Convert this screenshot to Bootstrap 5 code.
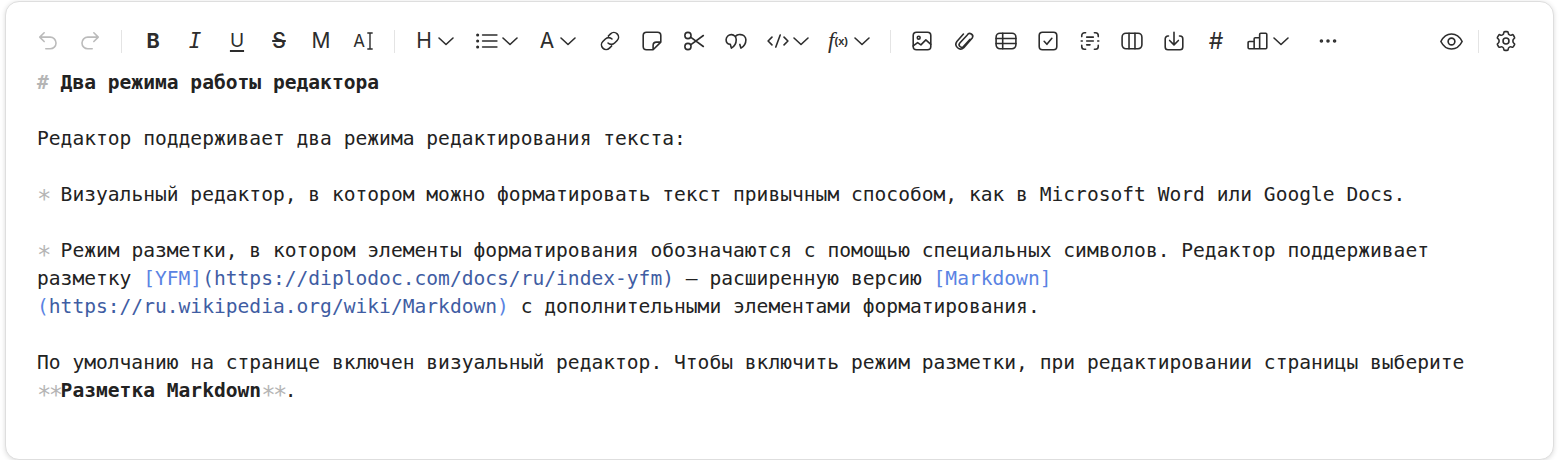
<!doctype html>
<html lang="ru"><head><meta charset="utf-8">
<link href="https://cdn.jsdelivr.net/npm/bootstrap@5.3.0/dist/css/bootstrap.min.css" rel="stylesheet">
<style>
body{background:#fff;overflow:hidden}
.ed-shell{width:1549px;height:459px;margin:1px 0 0 5px;background:#fff;border:1px solid #dedede;border-radius:14px;box-shadow:0 1px 5px rgba(0,0,0,.14)}
.ed-bar{height:36px;margin:21px 26px 10px 21px;color:#2d2d2d}
.ed-btn{height:28px;width:42px;padding:0;border:0;background:none;color:#2d2d2d;font:400 21px/28px Inter,sans-serif;display:flex;align-items:center;justify-content:center;flex:none}
.ed-btn.ed-drop{width:62px;gap:3px}
.ed-btn.ed-drop.ed-w61{width:61px;gap:5px}
.ed-btn.ed-off{color:#bbb}
.ed-btn svg{width:22px;height:22px;flex:none;fill:none;stroke:currentColor;stroke-width:1.45;stroke-linecap:round;stroke-linejoin:round}
.ed-btn svg.ed-chev{width:18px;height:18px;stroke-width:1.6}
.ed-btn svg.ed-eye{width:25px;height:25px;stroke-width:1.3}
.ed-btn svg.ed-cursor{width:6px;height:18px;stroke-width:1.4;margin-left:2px}
.ed-sep{width:1px;height:23px;background:#e4e4e4;margin:0 10px;flex:none}
.ed-sep.ed-sep2{margin:0 6px}
.ed-btn.ed-b{font-weight:700;font-size:20px}
.ed-btn.ed-i{font:italic 400 21px "DejaVu Sans Mono",monospace}
.ed-btn.ed-u{text-decoration:underline;text-underline-offset:3px;text-decoration-thickness:1.5px;font-size:19px}
.ed-btn.ed-s{text-decoration:line-through;text-decoration-thickness:1.5px;font-size:21px;font-weight:500}
.ed-btn.ed-hash{font-size:23px}
.ed-a{font-size:17px}
.ed-fx{display:inline-flex;align-items:center}
.ed-f{font:italic 400 23px/28px "Liberation Serif",serif}
.ed-x{font:700 11px/28px "Liberation Sans",sans-serif}
.ed-text{margin:0 40px 0 31px;font:19.6px/28px "DejaVu Sans Mono","Liberation Mono",monospace;color:#222;white-space:pre-wrap}
.ed-mk{color:#b5b5b5}
.ed-ast{vertical-align:-6px;line-height:0;font-size:24px;letter-spacing:-2.65px;font-weight:400}
.ed-strong{font-weight:700}
.ed-ln{color:#5a83e3}
.ed-url{color:#3f5da3;white-space:nowrap}
</style></head>
<body>
<svg width="0" height="0" class="position-absolute"><symbol id="chev" viewBox="0 0 18 18"><path d="M2 6l7 6.500L16 6"/></symbol></svg>
<div class="ed-shell">
<div class="ed-bar d-flex align-items-center">
<button class="ed-btn ed-off" aria-label="undo"><svg viewBox="0 0 20 20"><path d="M6.500 2.500 2.500 6.500l4 4M2.500 6.500H12a5.300 5.300 0 0 1 0 10.600H8"/></svg></button>
<button class="ed-btn ed-off" aria-label="redo"><svg viewBox="0 0 20 20"><path d="M13.500 2.500l4 4-4 4M17.500 6.500H8a5.300 5.300 0 0 0 0 10.600h4"/></svg></button>
<span class="ed-sep"></span>
<button class="ed-btn ed-b">B</button>
<button class="ed-btn ed-i">I</button>
<button class="ed-btn ed-u">U</button>
<button class="ed-btn ed-s">S</button>
<button class="ed-btn">M</button>
<button class="ed-btn" aria-label="typograf"><span class="ed-a">A</span><svg class="ed-cursor" viewBox="0 0 6 18"><path d="M.8 1h4.400M.8 17h4.400M3 1v16"/></svg></button>
<span class="ed-sep"></span>
<button class="ed-btn ed-drop ed-w61">H<svg class="ed-chev"><use href="#chev"/></svg></button>
<button class="ed-btn ed-drop" aria-label="list"><svg viewBox="0 0 20 20"><path d="M6 4.500h13M6 10h13M6 15.500h13"/><circle cx="1.500" cy="4.500" r=".7"/><circle cx="1.500" cy="10" r=".7"/><circle cx="1.500" cy="15.500" r=".7"/></svg><svg class="ed-chev"><use href="#chev"/></svg></button>
<button class="ed-btn ed-drop ed-w61">A<svg class="ed-chev"><use href="#chev"/></svg></button>
<button class="ed-btn" aria-label="link"><svg viewBox="0 0 20 20"><path d="M8.500 5.500 10.500 3.500a4.200 4.200 0 0 1 6 6l-2.300 2.300a4.200 4.200 0 0 1-6 0M11.500 14.500l-2 2a4.200 4.200 0 0 1-6-6l2.300-2.300a4.200 4.200 0 0 1 6 0"/></svg></button>
<button class="ed-btn" aria-label="note"><svg viewBox="0 0 20 20"><path d="M18 11V5a3 3 0 0 0-3-3H5a3 3 0 0 0-3 3v10a3 3 0 0 0 3 3h6zM18 11h-4a3 3 0 0 0-3 3v4"/></svg></button>
<button class="ed-btn" aria-label="cut"><svg viewBox="0 0 20 20"><circle cx="4.500" cy="5" r="2.800"/><circle cx="4.500" cy="15" r="2.800"/><path d="M6.900 6.500 18.500 15M6.900 13.500 18.500 5"/></svg></button>
<button class="ed-btn" aria-label="quote"><svg viewBox="0 0 20 20"><path d="M6 4.200a4.700 4.700 0 0 0-5 4.600c0 2.500 1.700 4 3.800 4.200l1 3.500c2.500-1.500 4.400-4.500 4.400-7.700a4.700 4.700 0 0 0-4.200-4.600zM9.500 5.800a4.700 4.700 0 0 1 4.500-1.600 4.700 4.700 0 0 1 5 4.600c0 3.200-2 6.200-4.500 7.700l-1-3.400"/></svg></button>
<button class="ed-btn ed-drop" aria-label="code"><svg viewBox="0 0 20 20"><path d="M4.500 6.500 1 10l3.500 3.500M15.500 6.500 19 10l-3.500 3.500M12 4.500l-4 11"/></svg><svg class="ed-chev"><use href="#chev"/></svg></button>
<button class="ed-btn ed-drop ed-w61" aria-label="formula"><span class="ed-fx"><i class="ed-f">f</i><span class="ed-x">(x)</span></span><svg class="ed-chev"><use href="#chev"/></svg></button>
<span class="ed-sep"></span>
<button class="ed-btn" aria-label="image"><svg viewBox="0 0 20 20"><rect x="2" y="2" width="16" height="16" rx="3"/><circle cx="7" cy="7" r="1.300"/><path d="M2 14.500l4-3 3 2 4.500-4.500 4.500 4"/></svg></button>
<button class="ed-btn" aria-label="file"><svg viewBox="0 0 20 20"><path d="M15.500 8.500 9.500 15a2.300 2.300 0 0 1-3.300-3.200l6.800-7.300a2.200 2.200 0 0 1 4.500 2.800l-7.700 8.700a4.200 4.200 0 0 1-6.300-5.500l6-6.800"/></svg></button>
<button class="ed-btn" aria-label="table"><svg viewBox="0 0 20 20"><rect x="1" y="3" width="18" height="14" rx="3.500"/><path d="M1 7.700h18M1 12.300h18M7 3v14"/></svg></button>
<button class="ed-btn" aria-label="check"><svg viewBox="0 0 20 20"><rect x="2" y="2" width="16" height="16" rx="3"/><path d="M6.500 10.300 9 13l4.500-5.500"/></svg></button>
<button class="ed-btn" aria-label="scan"><svg viewBox="0 0 20 20"><path d="M6 2.500H5A2.500 2.500 0 0 0 2.500 5v1M14 2.500h1A2.500 2.500 0 0 1 17.500 5v1M6 17.500H5A2.500 2.500 0 0 1 2.500 15v-1M14 17.500h1a2.500 2.500 0 0 0 2.500-2.500v-1M2 10h1M17 10h1M7 6.500h6M7 10h6M7 13.500h3"/></svg></button>
<button class="ed-btn" aria-label="columns"><svg viewBox="0 0 20 20"><rect x="1" y="3" width="18" height="14" rx="3.500"/><path d="M7.300 3v14M12.700 3v14"/></svg></button>
<button class="ed-btn" aria-label="download"><svg viewBox="0 0 20 20"><path d="M10 2v11M6 9.500l4 4 4-4M5 5.500H4.500a2.500 2.500 0 0 0-2.500 2.500v7.500a2.500 2.500 0 0 0 2.500 2.500h11a2.500 2.500 0 0 0 2.500-2.500V8a2.500 2.500 0 0 0-2.500-2.500H15"/></svg></button>
<button class="ed-btn ed-hash">#</button>
<button class="ed-btn ed-drop" aria-label="chart"><svg viewBox="0 0 20 20"><path d="M1 11.500a1 1 0 0 1 1-1h4.500V17H2a1 1 0 0 1-1-1zM6.500 8a1 1 0 0 1 1-1h4v10h-5zM11.500 4a1 1 0 0 1 1-1h4.500a1 1 0 0 1 1 1v12a1 1 0 0 1-1 1h-5.500z"/></svg><svg class="ed-chev"><use href="#chev"/></svg></button>
<button class="ed-btn ms-2" aria-label="more"><svg viewBox="0 0 20 20"><circle cx="4" cy="10" r=".9"/><circle cx="10" cy="10" r=".9"/><circle cx="16" cy="10" r=".9"/></svg></button>
<div class="ms-auto d-flex align-items-center">
<button class="ed-btn" aria-label="preview"><svg class="ed-eye" viewBox="0 0 20 20"><path d="M1.500 10C3.500 6 6.500 4 10 4s6.500 2 8.500 6c-2 4-5 6-8.500 6s-6.500-2-8.500-6z"/><circle cx="10" cy="10" r="2.700"/></svg></button>
<span class="ed-sep ed-sep2"></span>
<button class="ed-btn" aria-label="settings"><svg viewBox="0 0 20 20"><path d="M8 2.500c0-.5.400-1 1-1h2c.6 0 1 .5 1 1 0 1.700 1.900 2.800 3.300 1.900.5-.3 1.100-.1 1.400.4l1 1.700c.3.500.1 1.100-.4 1.400-1.400.9-1.400 3.300 0 4.200.5.300.7.900.4 1.400l-1 1.700c-.3.500-.9.700-1.400.4-1.400-.9-3.300.2-3.300 1.900 0 .5-.4 1-1 1H9c-.6 0-1-.5-1-1 0-1.700-1.900-2.800-3.300-1.900-.5.300-1.100.1-1.400-.4l-1-1.700c-.3-.5-.1-1.100.4-1.400 1.400-.9 1.400-3.300 0-4.200-.5-.3-.7-.9-.4-1.400l1-1.700c.3-.5.900-.7 1.400-.4C6.100 5.300 8 4.200 8 2.500z"/><circle cx="10" cy="10" r="2.700"/></svg></button>
</div>
</div>
<div class="ed-text"><span class="ed-mk ed-strong">#</span> <span class="ed-strong">Два режима работы редактора</span>

Редактор поддерживает два режима редактирования текста:

<span class="ed-mk ed-ast">*</span> Визуальный редактор, в котором можно форматировать текст привычным способом, как в Microsoft Word или Google Docs.

<span class="ed-mk ed-ast">*</span> Режим разметки, в котором элементы форматирования обозначаются с помощью специальных символов. Редактор поддерживает разметку <span class="ed-ln">[YFM]</span><span class="ed-url">(https://diplodoc.com/docs/ru/index-yfm)</span> — расширенную версию <span class="ed-ln">[Markdown]</span><span class="ed-url"><span class="ed-ln">(</span>https://ru.wikipedia.org/wiki/Markdown<span class="ed-ln">)</span></span> с дополнительными элементами форматирования.

По умолчанию на странице включен визуальный редактор. Чтобы включить режим разметки, при редактировании страницы выберите <span class="ed-mk ed-ast">**</span><span class="ed-strong">Разметка Markdown</span><span class="ed-mk ed-ast">**</span>.</div>
</div>
<script src="https://cdn.jsdelivr.net/npm/bootstrap@5.3.0/dist/js/bootstrap.bundle.min.js"></script>
</body></html>
